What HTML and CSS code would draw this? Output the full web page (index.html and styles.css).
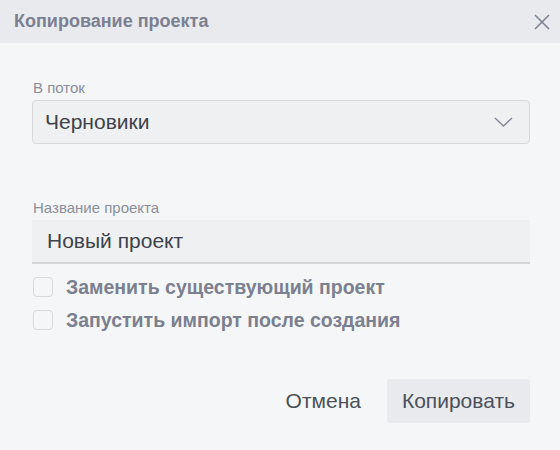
FILE: index.html
```html
<!DOCTYPE html>
<html lang="ru">
<head>
<meta charset="utf-8">
<link rel="stylesheet" href="styles.css">
</head>
<body>
<div class="dialog">
  <div class="header">
    <span class="title">Копирование проекта</span>
    <svg class="close" width="16" height="16" viewBox="0 0 16 16"><path d="M1 1L15 15M15 1L1 15" stroke="#7c8190" stroke-width="1.5" fill="none"/></svg>
  </div>
  <div class="body">
    <div class="field">
      <div class="label">В поток</div>
      <div class="select">
        <span class="value">Черновики</span>
        <svg width="19" height="10" viewBox="0 0 19 10"><path d="M1 1L9.5 9L18 1" stroke="#858a96" stroke-width="1.5" fill="none"/></svg>
      </div>
    </div>
    <div class="field field2">
      <div class="label">Название проекта</div>
      <div class="input"><span class="value">Новый проект</span></div>
    </div>
    <div class="checks">
      <label class="check"><span class="box"></span><span class="ctext">Заменить существующий проект</span></label>
      <label class="check"><span class="box"></span><span class="ctext">Запустить импорт после создания</span></label>
    </div>
    <div class="actions">
      <button class="btn cancel">Отмена</button>
      <button class="btn primary">Копировать</button>
    </div>
  </div>
</div>
</body>
</html>
```
FILE: styles.css
```css
* { box-sizing: border-box; }
html, body { margin: 0; padding: 0; }
body {
  width: 560px;
  height: 450px;
  background: #f5f6f8;
  font-family: "Liberation Sans", Arial, sans-serif;
  overflow: hidden;
}
.dialog { display: flex; flex-direction: column; }
.header {
  height: 43px;
  background: #e9eaee;
  display: flex;
  align-items: center;
  justify-content: space-between;
  padding: 0 10px 0 14px;
}
.title {
  font-size: 18px;
  font-weight: bold;
  color: #7b8090;
}
.close { display: block; }
.body {
  padding: 37px 30px 0 32px;
  display: flex;
  flex-direction: column;
}
.label {
  font-size: 15px;
  line-height: 16px;
  color: #8a8f9b;
  padding-left: 1px;
  margin-bottom: 4px;
}
.select {
  height: 44px;
  border: 1px solid #d6d8dc;
  border-radius: 4px;
  background: #eff0f2;
  display: flex;
  align-items: center;
  justify-content: space-between;
  padding: 0 16px 0 12px;
}
.value {
  font-size: 21px;
  color: #3e424a;
}
.field2 { margin-top: 56px; }
.input {
  height: 44px;
  background: #eff0f2;
  border-bottom: 2px solid #d3d5d9;
  display: flex;
  align-items: center;
  padding: 0 14px 0 15px;
}
.checks {
  margin-top: 13px;
  display: flex;
  flex-direction: column;
  gap: 13px;
}
.check {
  display: flex;
  align-items: center;
  gap: 13px;
  padding-left: 1px;
}
.box {
  width: 20px;
  height: 20px;
  border: 1px solid #d6d8dc;
  border-radius: 4px;
  background: #f5f6f8;
}
.ctext {
  font-size: 19.5px;
  font-weight: bold;
  color: #7b8090;
  line-height: 20px;
}
.actions {
  margin-top: 49px;
  display: flex;
  justify-content: flex-end;
  gap: 11px;
}
.btn {
  height: 44px;
  border: none;
  border-radius: 3px;
  font-family: "Liberation Sans", Arial, sans-serif;
  font-size: 21px;
  color: #4b5059;
  padding: 0 15px;
  background: transparent;
}
.primary { background: #e9eaee; }
```
